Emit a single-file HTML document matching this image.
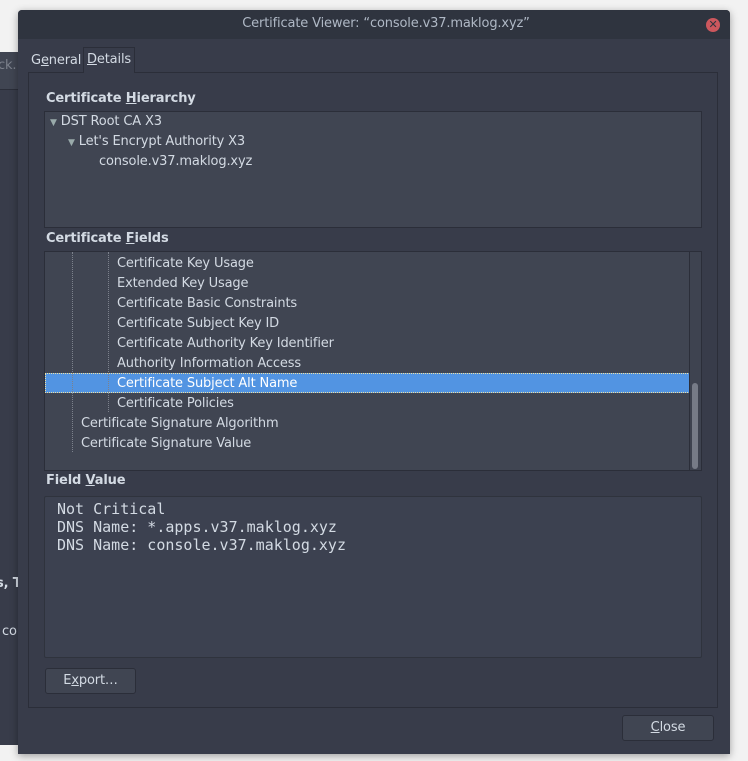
<!DOCTYPE html>
<html><head><meta charset="utf-8"><style>
*{margin:0;padding:0;box-sizing:border-box}
body{width:748px;height:761px;background:#f2f2f2;position:relative;overflow:hidden;font-family:"DejaVu Sans","Liberation Sans",sans-serif;font-size:13px;letter-spacing:-0.15px;color:#d3dae3}
.a{position:absolute}
u{text-decoration:underline}
.t{white-space:nowrap}
</style></head><body>
<div class="a" style="left:0;top:52px;width:40px;height:693px;background:#383c4a"></div>
<div class="a" style="left:0;top:52px;width:40px;height:38px;background:#404552;border-bottom:1px solid #2b2e39"></div>
<div class="a t" style="left:-2px;top:58px;color:#7c818c">ck.</div>
<div class="a t" style="left:-4px;top:576px;font-weight:bold">s, T</div>
<div class="a t" style="left:2px;top:624px">co</div>
<div class="a" style="left:18px;top:10px;width:712px;height:744px;background:#383c4a;box-shadow:0 2px 8px rgba(0,0,0,.35);border-radius:4px 4px 0 0"></div>
<div class="a" style="left:18px;top:10px;width:712px;height:29px;background:#2f343f;border-radius:4px 4px 0 0"></div>
<div class="a t" style="left:30px;top:16px;width:712px;text-align:center;color:#afb8c5">Certificate Viewer: “console.v37.maklog.xyz”</div>
<div class="a" style="left:706px;top:18px;width:14px;height:14px;border-radius:50%;background:#cc575d;color:#2f343f;font-size:11px;line-height:14px;text-align:center;font-weight:bold">✕</div>
<div class="a" style="left:28px;top:72px;width:690px;height:636px;border:1px solid #2b2e39"></div>
<div class="a t" style="left:31px;top:53px">G<u>e</u>neral</div>
<div class="a" style="left:83px;top:47px;width:52px;height:26px;border:1px solid #2b2e39;border-bottom:none;background:#383c4a"></div>
<div class="a t" style="left:87px;top:52px"><u>D</u>etails</div>
<div class="a t" style="left:46px;top:91px;font-weight:bold">Certificate <u>H</u>ierarchy</div>
<div class="a" style="left:44px;top:111px;width:658px;height:117px;background:#404552;border:1px solid #2b2e39"></div>
<div class="a t" style="left:50px;top:114px"><span style="font-size:9px;color:#9aa">▼</span> DST Root CA X3</div>
<div class="a t" style="left:68px;top:134px"><span style="font-size:9px;color:#9aa">▼</span> Let's Encrypt Authority X3</div>
<div class="a t" style="left:99px;top:154px">console.v37.maklog.xyz</div>
<div class="a t" style="left:46px;top:231px;font-weight:bold">Certificate <u>F</u>ields</div>
<div class="a" style="left:44px;top:251px;width:658px;height:220px;background:#404552;border:1px solid #2b2e39;overflow:hidden">
 <div class="a" style="left:0;top:121px;width:645px;height:20px;background:#5294e2;border:1px dotted #f0e0a0"></div>
 <div class="a" style="left:27px;top:0;height:200px;border-left:1px dotted #7c818c"></div>
 <div class="a" style="left:63px;top:0;height:160px;border-left:1px dotted #7c818c"></div>
 <div class="a t" style="left:72px;top:2px;line-height:20px">Certificate Key Usage<br>Extended Key Usage<br>Certificate Basic Constraints<br>Certificate Subject Key ID<br>Certificate Authority Key Identifier<br>Authority Information Access<br><span style="color:#fff">Certificate Subject Alt Name</span><br>Certificate Policies</div>
 <div class="a t" style="left:36px;top:162px;line-height:20px">Certificate Signature Algorithm<br>Certificate Signature Value</div>
 <div class="a" style="left:644px;top:0;width:13px;height:218px;background:#3e4350;border-left:1px solid #2b2e39"></div>
 <div class="a" style="left:647px;top:131px;width:6px;height:86px;background:#767b87;border-radius:3px"></div>
</div>
<div class="a t" style="left:46px;top:473px;font-weight:bold">Field <u>V</u>alue</div>
<div class="a" style="left:44px;top:496px;width:658px;height:162px;background:#3c4150;border:1px solid #2f333d;border-radius:2px"></div>
<div class="a t" style="left:57px;top:500px;font-family:'DejaVu Sans Mono','Liberation Mono',monospace;font-size:15px;letter-spacing:0;line-height:18px">Not Critical<br>DNS Name: *.apps.v37.maklog.xyz<br>DNS Name: console.v37.maklog.xyz</div>
<div class="a" style="left:45px;top:668px;width:91px;height:26px;background:#404552;border:1px solid #2b2e39;border-radius:3px;text-align:center;line-height:24px">E<u>x</u>port…</div>
<div class="a" style="left:622px;top:715px;width:92px;height:26px;background:#404552;border:1px solid #2b2e39;border-radius:3px;text-align:center;line-height:24px"><u>C</u>lose</div>
</body></html>
